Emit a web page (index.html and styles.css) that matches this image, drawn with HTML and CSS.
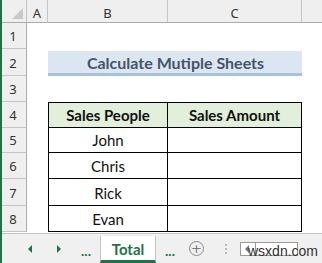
FILE: index.html
```html
<!DOCTYPE html>
<html lang="en">
<head>
  <meta charset="UTF-8" />
  <title>Calculate Mutiple Sheets</title>
  <link rel="stylesheet" href="styles.css">
</head>
<body>
  <div class="app">
    <div class="edge"></div>
    <div class="main">

      <!-- Sheet grid -->
      <div class="sheet">
        <div class="corner"><span class="tri"></span></div>
        <div class="colhead">A</div>
        <div class="colhead">B</div>
        <div class="colhead">C</div>
        <div class="colhead last"></div>

        <div class="rowhead">1</div>
        <div class="cell"></div><div class="cell"></div><div class="cell"></div><div class="cell"></div>

        <div class="rowhead">2</div>
        <div class="cell"></div>
        <div class="title">Calculate Mutiple Sheets</div>
        <div class="cell"></div>

        <div class="rowhead">3</div>
        <div class="cell"></div><div class="cell"></div><div class="cell"></div><div class="cell"></div>

        <div class="rowhead">4</div>
        <div class="cell"></div>
        <div class="tcell head first">Sales People</div>
        <div class="tcell head">Sales Amount</div>
        <div class="cell"></div>

        <div class="rowhead">5</div>
        <div class="cell"></div>
        <div class="tcell first">John</div>
        <div class="tcell"></div>
        <div class="cell"></div>

        <div class="rowhead">6</div>
        <div class="cell"></div>
        <div class="tcell first">Chris</div>
        <div class="tcell"></div>
        <div class="cell"></div>

        <div class="rowhead">7</div>
        <div class="cell"></div>
        <div class="tcell first">Rick</div>
        <div class="tcell"></div>
        <div class="cell"></div>

        <div class="rowhead">8</div>
        <div class="cell"></div>
        <div class="tcell first">Evan</div>
        <div class="tcell"></div>
        <div class="cell"></div>
      </div>

      <!-- Sheet tabs -->
      <div class="tabs">
        <span class="arrow left"></span>
        <span class="arrow right"></span>
        <span class="dots">...</span>
        <span class="tab">Total</span>
        <span class="dots">...</span>
        <span class="add">+</span>
        <span class="split"></span>
        <div class="scroll">
          <span class="sarrow"></span>
          <span class="thumb"></span>
        </div>
        <span class="mark">wsxdn.com</span>
      </div>

    </div>
  </div>
</body>
</html>
```

FILE: styles.css
```css
* {
  box-sizing: border-box;
  margin: 0;
  padding: 0;
}

body, html {
  height: 100%;
  background: #fff;
  font-family: Lato, "Open Sans", sans-serif;
}

.app {
  display: flex;
  height: 263px;
  width: 322px;
  overflow: hidden;
}

.edge {
  width: 2px;
  background: #217346;
}

.main {
  flex: 1;
  display: flex;
  flex-direction: column;
  position: relative;
}

/* ---------- grid ---------- */
.sheet {
  display: grid;
  grid-template-columns: 25px 21px 120px 134px 1fr;
  grid-template-rows: 23px 26px 27px 26px 26px 25px 26px 27px 26px;
}

.corner {
  background: #efefef;
  border-right: 1px solid #c4c4c4;
  border-bottom: 1px solid #ababab;
  position: relative;
}

.corner .tri {
  position: absolute;
  right: 3px;
  bottom: 3px;
  width: 0;
  height: 0;
  border-left: 11px solid transparent;
  border-bottom: 11px solid #c9c9c9;
}

.colhead {
  background: #efefef;
  border-right: 1px solid #c4c4c4;
  border-bottom: 1px solid #ababab;
  display: flex;
  justify-content: center;
  align-items: center;
  padding-top: 3px;
  font-family: "Noto Sans", sans-serif;
  font-size: 13px;
  color: #333;
}

.colhead.last {
  border-right: none;
}

.rowhead {
  background: #efefef;
  border-right: 1px solid #ababab;
  border-bottom: 1px solid #c4c4c4;
  display: flex;
  justify-content: center;
  align-items: flex-end;
  padding-bottom: 3px;
  padding-right: 2px;
  font-family: "Noto Sans", sans-serif;
  font-size: 13px;
  color: #333;
}

.title {
  grid-column: span 2;
  background: #dce6f1;
  border-top: 2px solid #fff;
  border-bottom: 3px solid #a7c0de;
  display: flex;
  justify-content: center;
  align-items: center;
  padding-left: 1px;
  padding-top: 1px;
  font-size: 16px;
  font-weight: bold;
  color: #44546a;
}

.tcell {
  border-right: 1px solid #000;
  border-bottom: 1px solid #000;
  display: flex;
  justify-content: center;
  align-items: flex-end;
  padding-bottom: 3px;
  font-size: 15px;
  color: #111;
}

.tcell.first {
  border-left: 1px solid #000;
}

.tcell.head {
  border-top: 1px solid #000;
  background: #e2efda;
  font-weight: bold;
}

/* ---------- tabs ---------- */
.tabs {
  flex: 1;
  display: flex;
  align-items: center;
  background: #f0f0f0;
  border-top: 1px solid #c4c4c4;
  margin-top: 1px;
  padding-left: 26px;
  font-size: 13px;
}

.arrow {
  width: 0;
  height: 0;
  border-top: 4px solid transparent;
  border-bottom: 4px solid transparent;
}

.arrow.left {
  border-right: 4px solid #217346;
}

.arrow.right {
  border-left: 4px solid #217346;
  margin-left: 25px;
}

.dots {
  color: #217346;
  font-weight: bold;
  font-size: 14px;
  margin-left: 20px;
  padding-top: 4px;
}

.tab {
  align-self: stretch;
  margin-left: 9px;
  width: 56px;
  margin-top: 2px;
  background: #fff;
  border-left: 1px solid #c4c4c4;
  border-right: 1px solid #c4c4c4;
  border-bottom: 3px solid #217346;
  display: flex;
  justify-content: center;
  align-items: center;
  padding-top: 1px;
  color: #217346;
  font-weight: bold;
  font-size: 15px;
}

.tab + .dots {
  margin-left: 9px;
}

.add {
  width: 15px;
  height: 15px;
  margin-left: 14px;
  border: 1px solid #8a8a8a;
  border-radius: 50%;
  display: flex;
  justify-content: center;
  align-items: center;
  font-family: "DejaVu Sans", sans-serif;
  font-size: 13px;
  line-height: 1;
  color: #7a7a7a;
}

.split {
  width: 2px;
  height: 10px;
  margin-left: 21px;
  border-left: 2px dotted #b8b8b8;
}

.scroll {
  display: flex;
  align-items: center;
  margin-left: 13px;
  height: 14px;
  width: 58px;
  border: 1px solid #9a9a9a;
  background: #fff;
}

.sarrow {
  width: 0;
  height: 0;
  margin-left: 4px;
  border-top: 4px solid transparent;
  border-bottom: 4px solid transparent;
  border-right: 4px solid #777;
}

.thumb {
  height: 100%;
  margin-left: 6px;
  border-left: 1px solid #9a9a9a;
}

.mark {
  position: absolute;
  left: 246px;
  bottom: 4px;
  font-family: "Liberation Sans", sans-serif;
  font-size: 14px;
  color: #333;
}
```
